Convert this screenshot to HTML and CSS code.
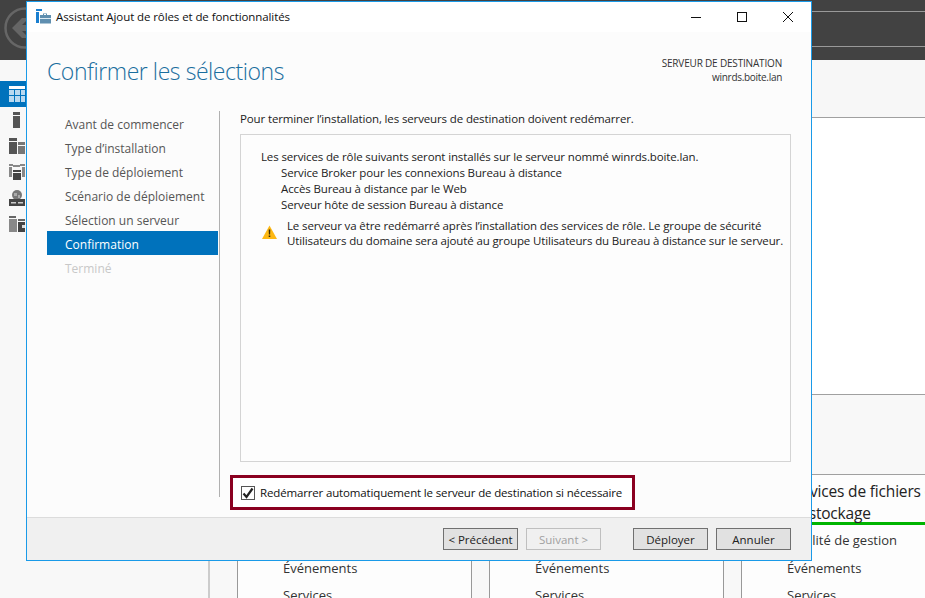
FILE: index.html
```html
<!DOCTYPE html>
<html lang="fr">
<head>
<meta charset="utf-8">
<title>Assistant Ajout de rôles et de fonctionnalités</title>
<link rel="stylesheet" href="styles.css">
</head>
<body>
<div class="desk">
  <header class="topbar">
    <svg class="back" width="44" height="44" viewBox="0 0 44 44"><circle cx="22" cy="22" r="19.5" fill="none" stroke="#666" stroke-width="2.5"/><path d="M9 22 19 12h7l-7 7h16v6H19l7 7h-7z" fill="#666"/></svg>
    <div class="crumb"></div>
  </header>
  <div class="main">
    <nav class="rail">
      <div class="rail-item active">
        <svg width="16" height="16" viewBox="0 0 16 16"><rect width="16" height="3" fill="#fff"/><path d="M0 4h5v5H0zM6 4h5v5H6zM12 4h4v5h-4zM0 10h5v6H0zM6 10h5v6H6zM12 10h4v6h-4z" fill="#b9d9f0"/></svg>
      </div>
      <div class="rail-item">
        <svg width="16" height="16" viewBox="0 0 16 16"><rect x="4" width="7" height="3" fill="#555"/><rect x="4" y="4" width="7" height="12" fill="#555"/></svg>
      </div>
      <div class="rail-item">
        <svg width="16" height="16" viewBox="0 0 16 16"><rect width="8" height="3" fill="#555"/><rect y="4" width="8" height="12" fill="#555"/><rect x="9" y="4" width="7" height="3" fill="#777"/><rect x="9" y="8" width="7" height="8" fill="#777"/></svg>
      </div>
      <div class="rail-item">
        <svg width="16" height="16" viewBox="0 0 16 16"><path d="M0 0h4v2H0zM11 0h5v2h-5zM0 3h3v10H0zM13 3h3v10h-3z" fill="#888"/><rect x="4" y="1" width="7" height="2" fill="#888"/><rect x="4" y="6" width="8" height="2" fill="#444"/><rect x="4" y="9" width="8" height="7" fill="#444"/></svg>
      </div>
      <div class="rail-item">
        <svg width="16" height="16" viewBox="0 0 16 16"><circle cx="8" cy="5" r="5" fill="#777"/><path d="M5 3h3v3H5zM9 5h2v3H9z" fill="#aaa"/><rect y="9" width="16" height="7" fill="#444"/><path d="M2 12h5v1.500H2zM9 12h5v1.500H9z" fill="#ccc"/></svg>
      </div>
      <div class="rail-item">
        <svg width="16" height="16" viewBox="0 0 16 16"><rect width="7" height="2" fill="#666"/><rect y="3" width="8" height="13" fill="#888"/><rect x="9" y="3" width="7" height="2" fill="#666"/><rect x="9" y="6" width="7" height="10" fill="#444"/><path d="M13 9h3v3h-3z" fill="#ddd"/></svg>
      </div>
    </nav>
    <div class="gutter"></div>
    <div class="content">
      <div class="content-head"></div>
      <div class="blank"></div>
      <div class="band"></div>
      <div class="tiles">
        <section class="tile">
          <div class="tile-title"></div>
          <div class="tile-rule"></div>
          <p class="tile-item offset">Événements</p>
          <p class="tile-item">Services</p>
        </section>
        <section class="tile">
          <div class="tile-title"></div>
          <div class="tile-rule"></div>
          <p class="tile-item offset">Événements</p>
          <p class="tile-item">Services</p>
        </section>
        <section class="tile">
          <h2 class="tile-title">Services de fichiers et de stockage</h2>
          <div class="tile-rule ok"></div>
          <p class="tile-item first">Qualité de gestion</p>
          <p class="tile-item">Événements</p>
          <p class="tile-item">Services</p>
        </section>
      </div>
    </div>
  </div>

  <div class="window">
    <div class="titlebar">
      <svg class="app-icon" width="15" height="15" viewBox="0 0 15 15"><path d="M0 0h6v2H0zM0 3h3v11H0z" fill="#1a7fd0"/><path d="M4 6h3V4.500h4V6h4v8.500H4z" fill="#5f8fb0"/><rect x="8" y="5" width="2" height="1" fill="#fff"/><rect x="4" y="9" width="11" height="1" fill="#dcebf5"/></svg>
      <span class="title-text">Assistant Ajout de rôles et de fonctionnalités</span>
      <div class="controls">
        <svg width="46" height="30" viewBox="0 0 46 30"><rect x="18" y="15" width="10" height="1" fill="#111"/></svg>
        <svg width="46" height="30" viewBox="0 0 46 30"><rect x="18.500" y="10.500" width="9" height="9" fill="none" stroke="#111"/></svg>
        <svg width="46" height="30" viewBox="0 0 46 30"><path d="M18 10l10 10M28 10 18 20" stroke="#111" fill="none"/></svg>
      </div>
    </div>
    <div class="wiz-head">
      <h1 class="wiz-title">Confirmer les sélections</h1>
      <div class="dest">
        <div>SERVEUR DE DESTINATION</div>
        <div class="dest-host">winrds.boite.lan</div>
      </div>
    </div>
    <div class="wiz-body">
      <ul class="steps">
        <li>Avant de commencer</li>
        <li>Type d’installation</li>
        <li>Type de déploiement</li>
        <li>Scénario de déploiement</li>
        <li>Sélection un serveur</li>
        <li class="current">Confirmation</li>
        <li class="disabled">Terminé</li>
      </ul>
      <div class="pane">
        <p class="lead">Pour terminer l’installation, les serveurs de destination doivent redémarrer.</p>
        <div class="box">
          <p>Les services de rôle suivants seront installés sur le serveur nommé winrds.boite.lan.</p>
          <ul class="roles">
            <li>Service Broker pour les connexions Bureau à distance</li>
            <li>Accès Bureau à distance par le Web</li>
            <li>Serveur hôte de session Bureau à distance</li>
          </ul>
          <div class="warn">
            <svg width="15" height="14" viewBox="0 0 15 14"><path d="M7.500 0.500 15 14H0z" fill="#fdb813"/><path d="M6.700 4.500h1.600l-.2 5H6.900zM6.700 10.500h1.600v1.600H6.700z" fill="#3a2a00"/></svg>
            <p>Le serveur va être redémarré après l’installation des services de rôle. Le groupe de sécurité Utilisateurs du domaine sera ajouté au groupe Utilisateurs du Bureau à distance sur le serveur.</p>
          </div>
        </div>
        <div class="restart">
          <span class="check"><svg width="12" height="12" viewBox="0 0 12 12"><path d="M1.500 6.500 4.500 10 10.500 1.500" fill="none" stroke="#222" stroke-width="2.200"/></svg></span>
          <span>Redémarrer automatiquement le serveur de destination si nécessaire</span>
        </div>
      </div>
    </div>
    <footer class="wiz-foot">
      <button class="btn">&lt; Précédent</button>
      <button class="btn off">Suivant &gt;</button>
      <button class="btn gap">Déployer</button>
      <button class="btn">Annuler</button>
    </footer>
  </div>
</div>
</body>
</html>
```
FILE: styles.css
```css
* { box-sizing: border-box; }
html, body { margin: 0; padding: 0; }
body { font-family: "Open Sans", "Noto Sans", sans-serif; font-size: 11.5px; color: #222; overflow: hidden; }
p, ul, h1, h2 { margin: 0; padding: 0; font-weight: 400; }
ul { list-style: none; }

.desk { position: relative; width: 925px; height: 598px; overflow: hidden; background: #f8f8f8; display: flex; flex-direction: column; }

.topbar { height: 60px; flex: none; background: #424242; display: flex; align-items: center; padding: 0 0 4px 3px; position: relative; }
.back { flex: none; }
.crumb { flex: 1; height: 36px; margin-top: 2px; border-top: 1px solid #999; border-bottom: 1px solid #999; }

.main { flex: 1; display: flex; min-height: 0; }
.rail { width: 26px; padding-top: 21px; flex: none; background: #f8f8f8; }
.rail-item { height: 26px; display: flex; align-items: center; justify-content: flex-end; padding-right: 1px; }
.rail-item.active { background: #0072bc; }
.gutter { width: 184px; flex: none; border-right: 2px solid #ccc; }

.content { flex: 1; display: flex; flex-direction: column; background: #fff; min-width: 0; }
.content-head { height: 58px; flex: none; background: #f7f7f7; border-bottom: 1px solid #a0a0a0; }
.blank { height: 276px; flex: none; background: #fff; }
.band { height: 81px; flex: none; background: #f8f8f8; border-top: 1px solid #a0a0a0; border-bottom: 1px solid #a0a0a0; }
.tiles { flex: 1; display: grid; grid-template-columns: 234px 234px 234px; column-gap: 18px; padding-left: 27px; background: #f8f8f8; }
.tile { background: #fdfdfd; border-left: 1px solid #999; border-right: 1px solid #999; width: 235px; }
.tile-title { height: 47px; padding: 5px 0 0 45px; font-size: 15.500px; line-height: 22px; letter-spacing: -.18px; color: #222; width: 215px; }
.tile-rule { height: 3px; background: #ddd; }
.tile-rule.ok { background: #00b400; }
.tile-item { padding-left: 45px; font-size: 13px; line-height: 27.500px; color: #333; white-space: nowrap; }
.tile-item.first { margin-top: 2px; }
.tile-item.offset { margin-top: 29.500px; }

.window { position: absolute; left: 26px; top: 1px; width: 786px; height: 560px; background: #fcfcfc; border: 1px solid #1a9ae8; display: flex; flex-direction: column; }

.titlebar { height: 30px; flex: none; background: #fff; display: flex; align-items: center; padding-left: 9px; }
.app-icon { flex: none; margin-top: -2px; }
.title-text { margin: -2px 0 0 5px; font-size: 11.500px; letter-spacing: -.09px; color: #111; white-space: nowrap; }
.controls { margin-left: auto; display: flex; height: 30px; }
.controls svg { display: block; }

.wiz-head { height: 79px; flex: none; display: flex; justify-content: space-between; padding: 0 29px 0 20px; }
.wiz-title { font-size: 23px; font-weight: 300; letter-spacing: -.44px; color: #1a6e9e; line-height: 32px; margin-top: 23px; white-space: nowrap; }
.dest { margin-top: 24px; font-size: 10px; letter-spacing: -.18px; line-height: 14px; text-align: right; color: #333; white-space: nowrap; }
.dest-host { letter-spacing: -.3px; }

.wiz-body { height: 406px; flex: none; display: flex; }
.steps { width: 172px; margin-left: 20px; flex: none; height: 386px; box-sizing: content-box; border-right: 1px solid #b0b0b0; padding-right: 0; position: relative; }
.steps li { height: 24px; line-height: 28px; padding-left: 18px; width: 171px; font-size: 12px; color: #555; white-space: nowrap; }
.steps li.current { background: #0072bc; color: #fff; }
.steps li.disabled { color: #c8c8c8; }

.pane { width: 551px; margin-left: 20px; flex: none; display: flex; flex-direction: column; letter-spacing: -.13px; }
.lead { line-height: 16px; margin-bottom: 7px; white-space: nowrap; }
.box { height: 328px; flex: none; border: 1px solid #d4d4d4; background: #fdfdfd; padding: 14px 0 0 20px; line-height: 16px; }
.box p { white-space: nowrap; }
.roles { padding-left: 20px; white-space: nowrap; }
.warn { display: flex; margin-top: 4px; align-items: flex-start; }
.warn svg { flex: none; margin: 8px 10px 0 1px; }
.warn p { white-space: normal; width: 505px; line-height: 15px; padding-top: 1px; }

.restart { width: 405px; height: 35px; flex: none; margin: 13px 0 0 -10px; border: 3px solid #8a0020; background: #fff; display: flex; align-items: center; padding-left: 8px; gap: 5px; white-space: nowrap; letter-spacing: -.15px; color: #111; }
.check { width: 14px; height: 14px; flex: none; border: 1px solid #555; background: #fff; display: flex; align-items: center; justify-content: center; }
.check svg { display: block; }

.wiz-foot { flex: 1; background: #f0f0f0; border-top: 1px solid #dcdcdc; display: flex; align-items: flex-start; padding: 10px 0 0 416px; gap: 8px; }
.btn { width: 75px; height: 22px; padding: 0; font: inherit; font-size: 11.500px; color: #222; background: #e1e1e1; border: 1px solid #707070; }
.btn.off { color: #a0a0a0; background: #f0f0f0; border-color: #bfbfbf; }
.btn.gap { margin-left: 24px; }
```
